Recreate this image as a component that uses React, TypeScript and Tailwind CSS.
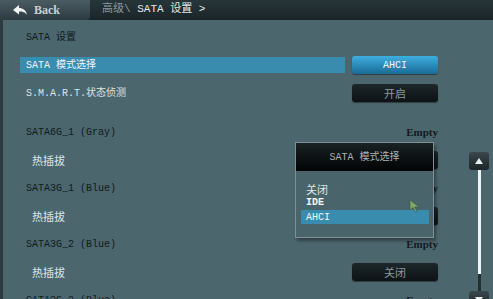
import { ReactNode } from "react";

const mono = "font-['Liberation_Mono','DejaVu_Sans_Mono','Noto_Sans_CJK_SC',monospace]";
const serif = "font-['Liberation_Serif','Noto_Sans_CJK_SC',serif]";

const Row = ({ children, className = "" }: { children: ReactNode; className?: string }) => (
  <div className={`h-[28px] flex items-center ${className}`}>{children}</div>
);

const DarkButton = ({ text }: { text: string }) => (
  <div className="w-[86px] h-[18px] rounded-[3px] bg-gradient-to-b from-[#1d272b] to-[#0d1215] flex items-center justify-center text-[11px] text-[#8d989b] shadow-[0_1px_1px_rgba(0,0,0,0.4)]">
    {text}
  </div>
);

const Empty = () => (
  <span className={`${serif} font-bold text-[11px] text-[#121a1d] w-[86px] text-right`}>Empty</span>
);

const PortRow = ({ name }: { name: string }) => (
  <Row className="justify-between pr-[55px]">
    <span className={`${mono} text-[10px] text-[#0f1a1e] pl-[23px]`}>{name}</span>
    <Empty />
  </Row>
);

const HotPlugRow = ({ value }: { value?: string }) => (
  <Row className="justify-between pr-[55px]">
    <span className="text-[11px] text-[#dfe6e8] pl-[29px] font-['Noto_Sans_CJK_SC',sans-serif]">热插拔</span>
    {value ? <DarkButton text={value} /> : <div className="w-[86px]" />}
  </Row>
);

export default function App() {
  return (
    <div className="w-[493px] h-[299px] overflow-hidden relative bg-[#4c666d] font-['Noto_Sans_CJK_SC',sans-serif]">
      {/* top bar */}
      <div className="h-[20px] bg-gradient-to-b from-[#27363a] to-[#1b2629] flex items-center border-b border-[#1a2326]">
        <div className="w-[90px] h-[20px] bg-gradient-to-b from-[#4a5c62] to-[#2c3b40] rounded-br-[4px] flex items-center pl-[12px] gap-[6px]">
          <svg width="16" height="12" viewBox="0 0 16 12">
            <path d="M1 6 L7 1 L7 4 C11 4 14 6 15 11 C13 8 11 7.5 7 7.5 L7 10.5 Z" fill="#f2f5f6" />
          </svg>
          <span className={`${serif} font-bold text-[12px] text-[#c9d1d3]`}>Back</span>
        </div>
        <div className={`${mono} text-[11px] pl-[12px] text-[#e4e9ea]`}>
          <span className="text-[#8e999c]">高级\</span> SATA 设置 &gt;
        </div>
      </div>

      {/* main panel */}
      <div className="relative h-[279px] border-l-[3px] border-[#2b3b40] pt-[3px]">
        <Row>
          <span className={`${mono} text-[10px] text-[#0f1a1e] pl-[23px]`}>SATA 设置</span>
        </Row>
        <Row className="justify-between pr-[55px]">
          <div className="ml-[17px] w-[325px] h-[16px] bg-[#3a8cae] flex items-center pl-[6px]">
            <span className={`${mono} text-[10px] text-[#f1f6f8]`}>SATA 模式选择</span>
          </div>
          <div className="w-[86px] h-[18px] rounded-[3px] bg-gradient-to-b from-[#3eaee0] to-[#1a6c96] flex items-center justify-center shadow-[0_1px_1px_rgba(0,0,0,0.4)]">
            <span className={`${mono} text-[10px] text-[#eef6fa]`}>AHCI</span>
          </div>
        </Row>
        <Row className="justify-between pr-[55px]">
          <span className={`${mono} text-[10px] text-[#dde4e6] pl-[23px]`}>S.M.A.R.T.状态侦测</span>
          <DarkButton text="开启" />
        </Row>
        <div className="h-[11px]" />
        <PortRow name="SATA6G_1 (Gray)" />
        <HotPlugRow value="关闭" />
        <PortRow name="SATA3G_1 (Blue)" />
        <HotPlugRow value="关闭" />
        <PortRow name="SATA3G_2 (Blue)" />
        <HotPlugRow value="关闭" />
        <PortRow name="SATA3G_3 (Blue)" />

        {/* scrollbar */}
        <div className="absolute left-[466px] top-[132px] w-[20px] h-[160px] flex flex-col items-center">
          <div className="w-[20px] h-[18px] rounded-[3px] bg-gradient-to-b from-[#3a474b] to-[#1c2528] flex items-center justify-center">
            <svg width="8" height="6" viewBox="0 0 8 6"><path d="M4 0 L8 6 L0 6 Z" fill="#e8eef0" /></svg>
          </div>
          <div className="w-[3px] h-[104px] bg-[#f1f4f5]" />
          <div className="w-[3px] h-[17px] bg-[#24302f]" />
          <div className="w-[20px] h-[18px] rounded-[3px] bg-gradient-to-b from-[#3a474b] to-[#1c2528] flex items-center justify-center">
            <svg width="8" height="6" viewBox="0 0 8 6"><path d="M0 0 L8 0 L4 6 Z" fill="#e8eef0" /></svg>
          </div>
        </div>

        {/* popup */}
        <div className="absolute left-[292px] top-[122px] w-[139px] h-[96px] border border-[#7f9196] bg-[#4a646b] shadow-[2px_3px_3px_rgba(0,0,0,0.35)] flex flex-col">
          <div className="h-[28px] bg-gradient-to-b from-[#1a2224] to-[#030506] flex items-center justify-center">
            <span className={`${mono} text-[10px] text-[#a9b3b6]`}>SATA 模式选择</span>
          </div>
          <div className="pt-[11px] flex flex-col">
            <span className="h-[14px] leading-[14px] pl-[10px] text-[11px] text-[#dfe6e8]">关闭</span>
            <span className={`h-[14px] leading-[14px] pl-[10px] ${mono} font-bold text-[10px] text-[#f4f7f8]`}>IDE</span>
            <div className="ml-[5px] w-[128px] h-[14px] bg-[#3a8cae] flex items-center pl-[5px]">
              <span className={`${mono} text-[10px] text-[#f4f8fa]`}>AHCI</span>
            </div>
          </div>
          {/* cursor */}
          <svg className="absolute left-[113px] top-[56px]" width="12" height="14" viewBox="0 0 12 14">
            <path d="M1 1 L1 11 L4 8.5 L6.5 13 L8 12.3 L5.7 8 L10 8 Z" fill="#7fa86a" stroke="#3e5a3a" strokeWidth="0.6" />
          </svg>
        </div>
      </div>
    </div>
  );
}
